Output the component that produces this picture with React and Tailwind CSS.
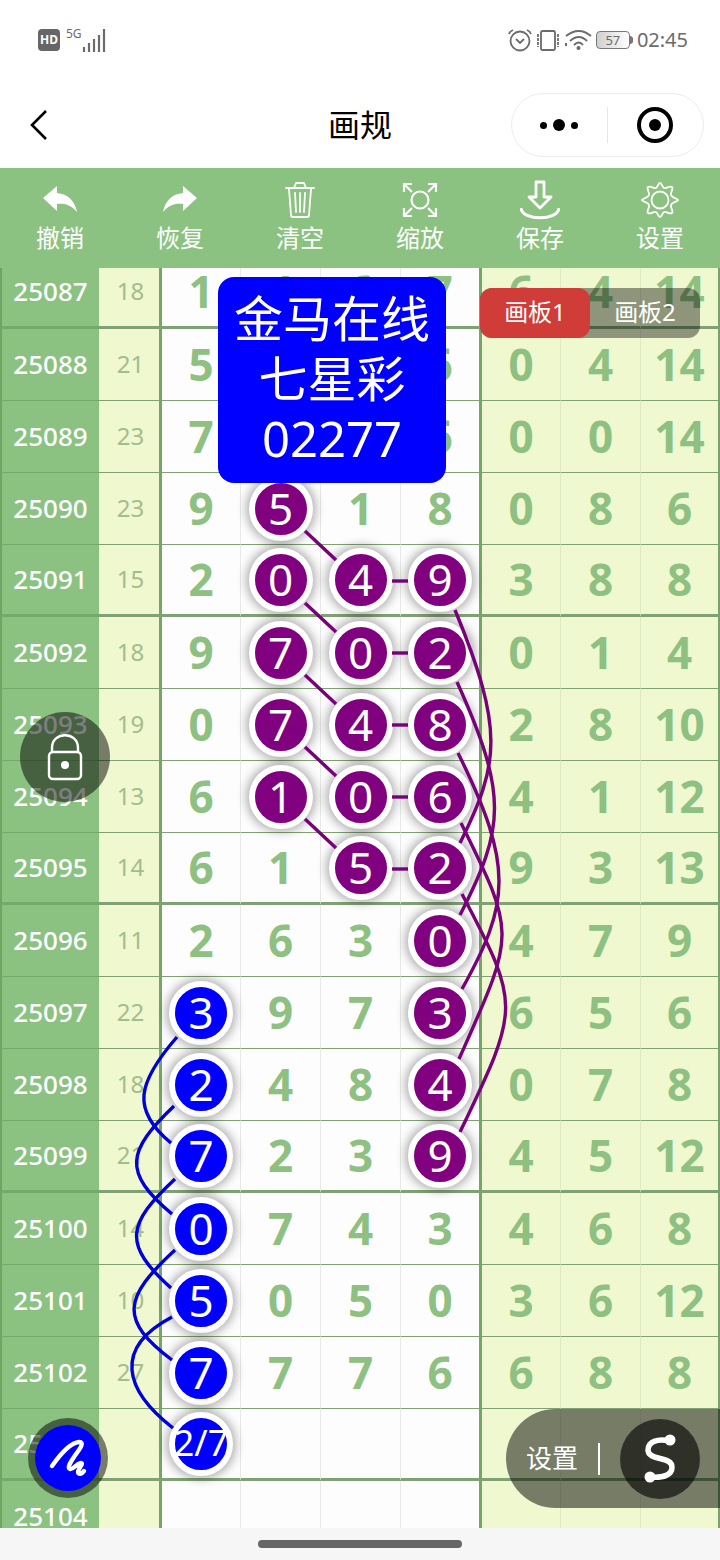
import React, { useState } from 'react';

// issue, sum, four drawn digits, three extra columns
const rows = [
  ['25087', 18, [1, 4, 6, 7], [6, 4, 14]],
  ['25088', 21, [5, 4, 6, 6], [0, 4, 14]],
  ['25089', 23, [7, 3, 7, 6], [0, 0, 14]],
  ['25090', 23, [9, 5, 1, 8], [0, 8, 6]],
  ['25091', 15, [2, 0, 4, 9], [3, 8, 8]],
  ['25092', 18, [9, 7, 0, 2], [0, 1, 4]],
  ['25093', 19, [0, 7, 4, 8], [2, 8, 10]],
  ['25094', 13, [6, 1, 0, 6], [4, 1, 12]],
  ['25095', 14, [6, 1, 5, 2], [9, 3, 13]],
  ['25096', 11, [2, 6, 3, 0], [4, 7, 9]],
  ['25097', 22, [3, 9, 7, 3], [6, 5, 6]],
  ['25098', 18, [2, 4, 8, 4], [0, 7, 8]],
  ['25099', 21, [7, 2, 3, 9], [4, 5, 12]],
  ['25100', 14, [0, 7, 4, 3], [4, 6, 8]],
  ['25101', 10, [5, 0, 5, 0], [3, 6, 12]],
  ['25102', 27, [7, 7, 7, 6], [6, 8, 8]],
  ['25103', '', ['2/7', '', '', ''], ['', '', '']],
  ['25104', '', ['', '', '', ''], ['', '', '']],
];

// digit columns that carry a ball, per issue
const purple = {
  25090: [1],
  25091: [1, 2, 3],
  25092: [1, 2, 3],
  25093: [1, 2, 3],
  25094: [1, 2, 3],
  25095: [2, 3],
  25096: [3],
  25097: [3],
  25098: [3],
  25099: [3],
};
const blueFrom = 25097;
const blueTo = 25103;

const purplePaths = [
  'M305 274 L336 303',
  'M305 346 L336 375',
  'M305 418 L336 447',
  'M305 490 L336 519',
  'M305 562 L336 591',
  'M392 324 H408',
  'M392 396 H408',
  'M392 468 H408',
  'M392 540 H408',
  'M392 612 H408',
  'M455 353 C504 472 500 506 460 586',
  'M457 425 C508 538 505 570 460 658',
  'M458 496 C514 609 510 646 462 732',
  'M461 566 C517 679 515 676 459 802',
  'M462 637 C521 749 520 750 460 875',
];

const bluePaths = [
  'M177 780 C137 826 131 853 171 886',
  'M174 849 C127 894 122 915 172 957',
  'M175 922 C127 967 122 987 171 1031',
  'M175 993 C123 1041 119 1063 172 1103',
  'M172 1060 C113 1091 124 1133 173 1171',
];

function UndoIcon({ flip }) {
  return (
    <svg viewBox="0 0 40 40" fill="white" className={flip ? 'size-10 -scale-x-100' : 'size-10'}>
      <path d="M3 18 L17 6 V13 C28 14 35 21 37 32 C31 25 25 23 17 24 V31 Z" />
    </svg>
  );
}

function TrashIcon() {
  return (
    <svg viewBox="0 0 40 40" fill="none" stroke="white" strokeWidth="1.8" strokeLinecap="round" strokeLinejoin="round" className="size-10">
      <path d="M6 8 H34 M14 8 L16 3 H24 L26 8 M9 9 L11 35 Q11 37 13 37 H27 Q29 37 29 35 L31 9 M15 13 L16 32 M20 13 V32 M25 13 L24 32" />
    </svg>
  );
}

function ZoomIcon() {
  return (
    <svg viewBox="0 0 40 40" fill="none" stroke="white" strokeWidth="2.2" className="size-10">
      <circle cx="20" cy="20" r="8.5" />
      <path d="M4 12 V4 H12 M4 4 L12 12 M28 4 H36 V12 M36 4 L28 12 M4 28 V36 H12 M4 36 L12 28 M36 28 V36 H28 M36 36 L28 28" />
    </svg>
  );
}

function SaveIcon() {
  return (
    <svg viewBox="0 0 40 40" fill="none" stroke="white" strokeWidth="2.8" strokeLinejoin="round" className="size-10">
      <path d="M16 2 H24 V17 H31 L20 28 L9 17 H16 Z" />
      <path d="M1 28 C2 41 38 41 39 28" strokeWidth="3" />
    </svg>
  );
}

function GearIcon() {
  return (
    <svg viewBox="0 0 40 40" fill="none" stroke="white" strokeWidth="1.8" strokeLinejoin="round" className="size-10">
      <circle cx="20" cy="20" r="8.5" />
      <path d="M20 3 C22 3 22 7 24 8 C26 9 30 5 32 7 C34 9 30 12 31 15 C32 18 37 18 38 20 C37 22 32 22 31 25 C30 28 34 31 32 33 C30 35 26 31 24 32 C22 33 22 37 20 37 C18 37 18 33 16 32 C14 31 10 35 8 33 C6 31 10 28 9 25 C8 22 3 22 2 20 C3 18 8 18 9 15 C10 12 6 9 8 7 C10 5 14 9 16 8 C18 7 18 3 20 3 Z" />
    </svg>
  );
}

const tools = [
  { label: '撤销', icon: <UndoIcon /> },
  { label: '恢复', icon: <UndoIcon flip /> },
  { label: '清空', icon: <TrashIcon /> },
  { label: '缩放', icon: <ZoomIcon /> },
  { label: '保存', icon: <SaveIcon /> },
  { label: '设置', icon: <GearIcon /> },
];

function StatusBar() {
  return (
    <div className="flex h-20 shrink-0 items-center justify-between pr-8 pl-[38px] text-[#6b6b6b]">
      <div className="flex items-center">
        <span className="flex h-[22px] w-[22px] items-center justify-center rounded bg-[#666] text-[12px] font-bold text-white">HD</span>
        <span className="self-start pl-[6px] text-[12px] leading-3">5G</span>
        <svg viewBox="0 0 24 24" stroke="currentColor" strokeWidth="2.2" className="size-6">
          <path d="M2 24 V19 M7 24 V15 M12 24 V11 M17 24 V7 M22 24 V1" />
        </svg>
      </div>
      <div className="flex items-center gap-1">
        <svg viewBox="0 0 24 24" fill="none" stroke="currentColor" strokeWidth="1.8" className="size-6">
          <circle cx="12" cy="13" r="9.5" />
          <path d="M8 11 L12 15 L16 11 M1 6 Q2 3 5 2 M23 6 Q22 3 19 2" />
        </svg>
        <svg viewBox="0 0 24 24" fill="none" stroke="currentColor" strokeWidth="1.8" className="size-6">
          <rect x="5" y="3" width="14" height="19" rx="1.5" />
          <path d="M2 6 V19 M22 6 V19" strokeDasharray="3 1" />
        </svg>
        <svg viewBox="0 0 28 24" fill="none" stroke="currentColor" strokeWidth="2" className="h-6 w-7">
          <path d="M2 8 Q15 -2 27 8 M6 13 Q15 5 23 13 M10 17 Q15 12 19 17" />
          <circle cx="14.5" cy="20" r="2" fill="currentColor" stroke="none" />
          <path d="M2 15 V18" />
        </svg>
        <span className="flex items-center">
          <span className="flex h-[18px] w-[34px] items-center justify-center rounded-sm border border-[#777] bg-linear-to-r from-[#d0d0d0] to-white text-[13px] leading-3">57</span>
          <span className="h-2 w-[3px] rounded-r-sm bg-[#777]" />
        </span>
        <span className="text-[20px] leading-6">02:45</span>
      </div>
    </div>
  );
}

function NavBar() {
  return (
    <header className="grid h-[88px] shrink-0 grid-cols-3 items-center px-4 pt-[2px]">
      <button aria-label="返回" className="ml-3 w-6">
        <svg viewBox="0 0 24 36" fill="none" stroke="black" strokeWidth="2.6" className="h-9 w-6">
          <path d="M18 4 L4 18 L18 32" />
        </svg>
      </button>
      <h1 className="text-center text-[32px] font-normal text-black">画规</h1>
      <div className="flex h-16 w-[193px] items-center justify-self-end rounded-full border border-[#ececec]">
        <button aria-label="更多" className="flex flex-1 items-center justify-center gap-[6px]">
          <span className="size-[7px] rounded-full bg-black" />
          <span className="size-3 rounded-full bg-black" />
          <span className="size-[7px] rounded-full bg-black" />
        </button>
        <span className="h-9 w-px bg-[#e6e6e6]" />
        <button aria-label="关闭" className="flex flex-1 items-center justify-center">
          <span className="flex size-9 items-center justify-center rounded-full border-4 border-black">
            <span className="size-3 rounded-full bg-black" />
          </span>
        </button>
      </div>
    </header>
  );
}

function Toolbar() {
  return (
    <nav className="grid h-[100px] shrink-0 grid-cols-6 bg-[#8cc281]">
      {tools.map((tool) => (
        <button key={tool.label} className="flex flex-col items-center pt-3 text-2xl text-white">
          {tool.icon}
          <span className="leading-9">{tool.label}</span>
        </button>
      ))}
    </nav>
  );
}

function Ball({ value, color }) {
  return (
    <span
      className={`relative mx-auto flex size-16 items-center justify-center rounded-full border-[6px] border-white pb-[2px] font-normal whitespace-nowrap text-white shadow-[0_0_10px_3px_rgba(0,0,0,0.3)] ${
        color === 'blue' ? 'bg-[#0000ff]' : 'bg-[#800080]'
      } ${String(value).length > 1 ? 'text-[36px]' : 'text-[44px]'}`}
    >
      {value}
    </span>
  );
}

function ballColor(issue, col) {
  if (purple[issue]?.includes(col)) return 'purple';
  if (col === 0 && issue >= blueFrom && issue <= blueTo) return 'blue';
  return null;
}

function TrendTable() {
  return (
    <table className="w-full table-fixed border-separate border-spacing-0 text-center">
      <colgroup>
        <col className="w-[99px]" />
        <col className="w-[63px]" />
        <col className="w-[79px]" />
        <col className="w-[80px]" />
        <col className="w-[80px]" />
        <col className="w-[81px]" />
        <col className="w-[79px]" />
        <col className="w-[80px]" />
        <col className="w-[79px]" />
      </colgroup>
      <tbody>
        {rows.map(([issue, sum, digits, extra], i) => {
          const line = i % 4 === 0 ? 'border-b-3' : 'border-b';
          return (
            <tr key={issue} className="h-[72px]">
              <th scope="row" className={`${line} border-l-2 border-l-[#6fa563] border-b-[#76a86b] bg-[#8cc281] p-0 pb-[2px] text-[26px] leading-8 font-medium text-white`}>
                {issue}
              </th>
              <td className={`${line} border-r-3 border-r-[#77a469] border-b-[#7fa173] bg-[#eff8ce] p-0 pb-[2px] pl-[3px] text-2xl text-[#a3bd8c]`}>{sum}</td>
              {digits.map((value, col) => {
                const color = ballColor(Number(issue), col);
                return (
                  <td
                    key={col}
                    className={`${line} ${
                      col === 3 ? 'border-r-3 border-r-[#77a469]' : 'border-r border-r-[#e6eae4]'
                    } ${color ? '' : 'pb-[2px]'} border-b-[#7fa173] bg-[#fdfdfd] text-[44px] leading-[60px] font-bold text-[#8dc081]`}
                  >
                    {color ? <Ball value={value} color={color} /> : value}
                  </td>
                );
              })}
              {extra.map((value, col) => (
                <td
                  key={col}
                  className={`${line} ${
                    col === 2 ? 'border-r-2 border-r-[#77a469]' : 'border-r border-r-[#dfe9c4]'
                  } border-b-[#7fa173] bg-[#eff8ce] p-0 pb-[2px] text-[44px] leading-[60px] font-bold text-[#8dc081]`}
                >
                  {value}
                </td>
              ))}
            </tr>
          );
        })}
      </tbody>
    </table>
  );
}

export default function App() {
  const [board, setBoard] = useState(1);

  return (
    <div className="flex h-screen flex-col bg-white font-['Noto_Sans','Noto_Sans_CJK_SC',sans-serif]">
      <StatusBar />
      <NavBar />
      <Toolbar />

      <main className="relative min-h-0 flex-1 overflow-hidden">
        <div className="relative -mt-[11px]">
          <TrendTable />
          <svg viewBox="0 0 720 1296" preserveAspectRatio="none" fill="none" strokeWidth="3.4" className="pointer-events-none absolute inset-0 h-full w-full">
            <g stroke="#780078">
              {purplePaths.map((d) => (
                <path key={d} d={d} vectorEffect="non-scaling-stroke" />
              ))}
            </g>
            <g stroke="#0000d8">
              {bluePaths.map((d) => (
                <path key={d} d={d} vectorEffect="non-scaling-stroke" />
              ))}
            </g>
          </svg>
        </div>

        <div className="absolute top-[9px] left-[218px] rounded-2xl bg-[#0000ff] px-4 pt-[11px] pb-[15px] text-center text-[49px] leading-[60px] text-white">
          <p>金马在线</p>
          <p>七星彩</p>
          <p>02277</p>
        </div>

        <div className="absolute top-5 right-5 flex h-[50px] rounded-xl bg-black/40 text-2xl text-white">
          <button onClick={() => setBoard(1)} className={`w-[110px] rounded-xl pb-[2px] ${board === 1 ? 'bg-[#d03c38]' : ''}`}>
            画板1
          </button>
          <button onClick={() => setBoard(2)} className={`w-[110px] rounded-xl pb-[2px] ${board === 2 ? 'bg-[#d03c38]' : ''}`}>
            画板2
          </button>
        </div>

        <button aria-label="锁定" className="absolute top-[444px] left-5 flex size-[90px] items-center justify-center rounded-full bg-black/50">
          <svg viewBox="0 0 40 50" fill="none" stroke="white" strokeWidth="2.4" className="h-[50px] w-10">
            <rect x="4" y="20" width="32" height="27" rx="4" />
            <path d="M7 20 V16 C7 -1 33 -1 33 16 V20" />
            <circle cx="20" cy="33" r="4" fill="white" stroke="none" />
          </svg>
        </button>

        <button aria-label="画笔" className="absolute bottom-[30px] left-7 flex size-20 items-center justify-center rounded-full bg-black/50">
          <span className="flex size-[66px] items-center justify-center rounded-full bg-[#0000ff]">
            <svg viewBox="0 0 40 40" fill="none" stroke="white" strokeWidth="4.4" strokeLinecap="round" strokeLinejoin="round" className="size-10">
              <path d="M4 28 C11 18 22 5 31 4 C38 4 30 13 26 19 C22 25 19 30 22 31 C25 32 28 26 33 25 C36 25 30 31 30 34 C30 37 34 36 36 33" />
            </svg>
          </span>
        </button>

        <div className="absolute right-0 bottom-5 flex h-[99px] items-center gap-5 rounded-l-full bg-black/50 px-5 text-white">
          <button className="text-[26px]">设置</button>
          <span className="h-8 w-[2px] bg-white" />
          <button aria-label="曲线" className="flex size-20 items-center justify-center rounded-full bg-black/60">
            <svg viewBox="0 0 40 50" fill="none" stroke="white" strokeWidth="5.5" className="h-[50px] w-10">
              <path d="M30 7 C17 4 8 8 8 16 C8 27 32 22 32 33 C32 41 24 44 10 43" />
              <circle cx="30" cy="6" r="5.5" fill="white" stroke="none" />
              <circle cx="10" cy="43" r="5.5" fill="white" stroke="none" />
            </svg>
          </button>
        </div>
      </main>

      <footer className="flex h-8 shrink-0 items-center justify-center bg-[#f6f6f6]">
        <span className="h-2 w-[204px] rounded-full bg-[#666]" />
      </footer>
    </div>
  );
}
